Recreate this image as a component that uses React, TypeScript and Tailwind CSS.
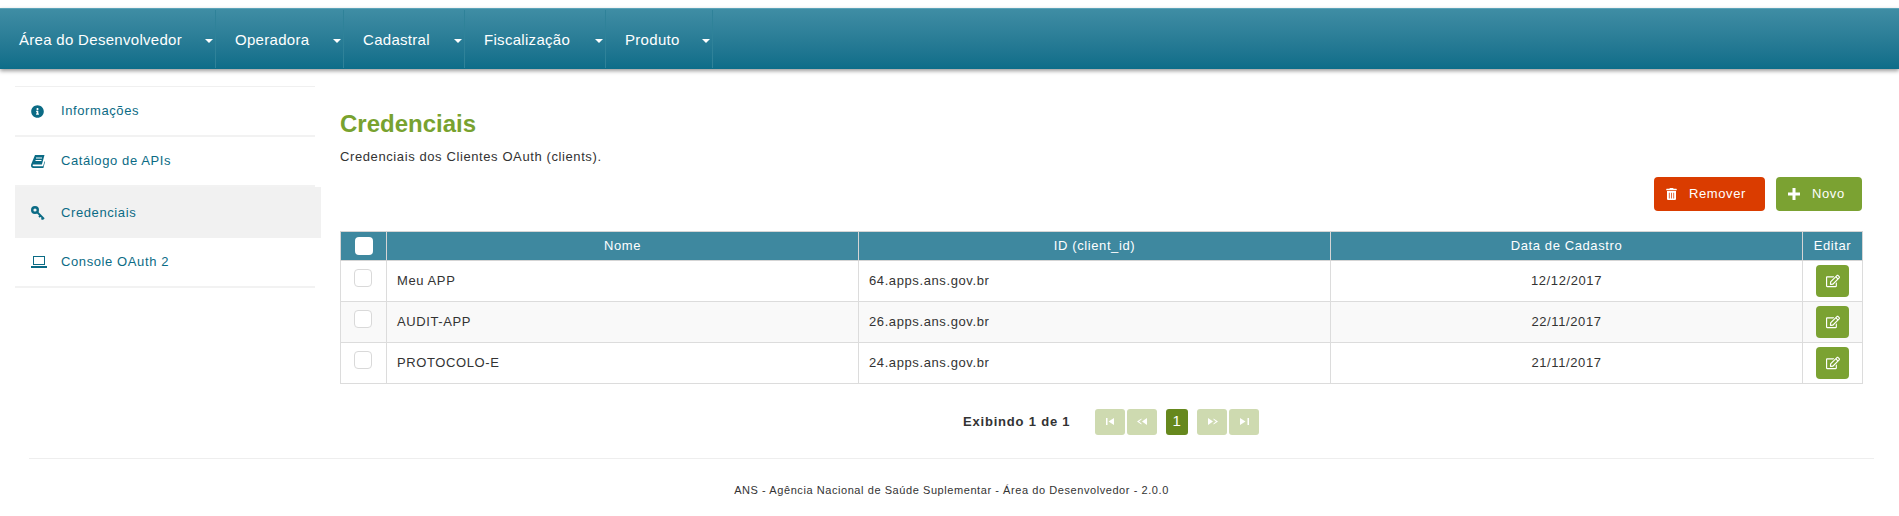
import { FaInfoCircle, FaTrashAlt, FaRegEdit } from "react-icons/fa";

const navItems = [
  { label: "Área do Desenvolvedor", width: "w-[216px]" },
  { label: "Operadora", width: "w-[128px]" },
  { label: "Cadastral", width: "w-[121px]" },
  { label: "Fiscalização", width: "w-[141px]" },
  { label: "Produto", width: "w-[107px]" },
];

function BookIcon() {
  return (
    <svg width="14" height="13" viewBox="0 0 14 13" fill="currentColor">
      <path d="M4 0h9.5l-2.6 9.5H2.6c-.7 0-1 .4-1 .8s.3.9 1 .9h9.5l1.4-5 .5.6-1.6 6.2H2.2C.8 13 0 11.800 0 10.500c0-.5.1-.9.2-1.300zM5 2.500v1h6v-1zM4.500 5v1h6V5z" fillRule="evenodd" />
    </svg>
  );
}

function KeyIcon() {
  return (
    <svg width="14" height="14" viewBox="0 0 14 14" fill="none" stroke="currentColor">
      <circle cx="4" cy="4" r="2.800" strokeWidth="2.400" />
      <path d="M6 6l7 7M9.500 9.500l-1.500 1.500M12 12l-1.500 1.500" strokeWidth="1.800" />
    </svg>
  );
}

function LaptopIcon() {
  return (
    <svg width="16" height="12" viewBox="0 0 16 12" fill="currentColor">
      <path d="M2 0h12v9H2zm1 1v7h10V1zM0 10h16v2H0z" fillRule="evenodd" />
    </svg>
  );
}

const sideItems = [
  { label: "Informações", icon: <FaInfoCircle className="w-[13px] h-[13px]" /> },
  { label: "Catálogo de APIs", icon: <BookIcon /> },
  { label: "Credenciais", icon: <KeyIcon />, active: true },
  { label: "Console OAuth 2", icon: <LaptopIcon /> },
];

const rows = [
  { name: "Meu APP", id: "64.apps.ans.gov.br", date: "12/12/2017" },
  { name: "AUDIT-APP", id: "26.apps.ans.gov.br", date: "22/11/2017" },
  { name: "PROTOCOLO-E", id: "24.apps.ans.gov.br", date: "21/11/2017" },
];

type PageKind = "first" | "prev" | "next" | "last";

function PageIcon({ kind }: { kind: PageKind }) {
  return (
    <svg width="11" height="7" viewBox="0 0 11 7" fill="#fff">
      {kind === "first" && <path d="M1 0h1.500v7H1zM9 0v7L3.500 3.500z" />}
      {kind === "prev" && <path d="M4.500 .5v1L2 3.500l2.500 2v1L0 3.500zM10 0v7L5 3.500z" />}
      {kind === "next" && <path d="M1 0v7l5-3.500zM6.500 .5v1l2.500 2-2.500 2v1L11 3.500z" />}
      {kind === "last" && <path d="M1 0v7l5.500-3.500zM8.500 0H10v7H8.500z" />}
    </svg>
  );
}

function PageButton({ kind }: { kind: PageKind }) {
  return (
    <span className="flex items-center justify-center w-[30px] h-[26px] pb-[2px] rounded-[3px] bg-[#cedab0]">
      <PageIcon kind={kind} />
    </span>
  );
}

export default function App() {
  return (
    <div className="min-h-[516px] bg-white pt-2 text-[13px] tracking-[0.6px] text-[#333] font-['Liberation_Sans',Arial,sans-serif]">
      <nav className="flex h-[61px] items-stretch border-t border-[#5ba3b8] bg-gradient-to-b from-[#3f8da4] to-[#0c6d89] shadow-[0_2px_4px_rgba(0,0,0,0.4)]">
        {navItems.map((item) => (
          <div
            key={item.label}
            className={`${item.width} relative flex items-center pl-[19px] pt-[2px] my-[1px] border-r border-[#2f8299] text-[15px] tracking-[0.3px] text-white`}
          >
            {item.label}
            <span className="absolute right-[2px] top-[29px] border-x-[4px] border-t-[4px] border-x-transparent border-t-white" />
          </div>
        ))}
      </nav>

      <div className="flex pt-[17px]">
        <aside className="w-[300px] ml-[15px] shrink-0 border-t border-[#f0f0f0]">
          {sideItems.map((item) => (
            <div
              key={item.label}
              className={
                item.active
                  ? "flex h-[51px] -mr-[6px] items-center pl-4 bg-[#f1f1f1] text-[#0b6b85]"
                  : "flex h-[50px] items-center pl-4 border-b-2 border-[#f2f2f2] text-[#0b6b85]"
              }
            >
              <span className="flex w-[30px] shrink-0 items-center">{item.icon}</span>
              {item.label}
            </div>
          ))}
        </aside>

        <main className="ml-[25px] w-[1522px]">
          <h1 className="mt-[24px] text-[24px] leading-[28px] font-bold tracking-normal text-[#78a22f]">Credenciais</h1>
          <p className="mt-[11px] leading-[16px]">Credenciais dos Clientes OAuth (clients).</p>

          <div className="mt-[12px] flex justify-end gap-[11px]">
            <button className="flex h-[34px] w-[111px] items-center rounded-[4px] bg-[#da3c00] pl-3 text-white">
              <FaTrashAlt className="w-[11px] h-3 mr-3" />
              Remover
            </button>
            <button className="flex h-[34px] w-[86px] items-center rounded-[4px] bg-[#7ba232] pl-3 text-white">
              <svg width="12" height="12" viewBox="0 0 12 12" fill="currentColor" className="mr-3">
                <path d="M4.500 0h3v4.500H12v3H7.500V12h-3V7.500H0v-3h4.500z" />
              </svg>
              Novo
            </button>
          </div>

          <table className="mt-[20px] w-full table-fixed border-collapse">
            <colgroup>
              <col className="w-[46px]" />
              <col className="w-[472px]" />
              <col className="w-[472px]" />
              <col className="w-[472px]" />
              <col className="w-[60px]" />
            </colgroup>
            <thead>
              <tr className="h-[29px] bg-[#3e889f] text-white font-normal">
                <th className="border border-[#d5d5d5] font-normal">
                  <span className="block mx-auto w-[18px] h-[18px] rounded-[4px] bg-white" />
                </th>
                <th className="border border-[#d5d5d5] font-normal">Nome</th>
                <th className="border border-[#d5d5d5] font-normal">ID (client_id)</th>
                <th className="border border-[#d5d5d5] font-normal">Data de Cadastro</th>
                <th className="border border-[#d5d5d5] font-normal">Editar</th>
              </tr>
            </thead>
            <tbody>
              {rows.map((row, i) => (
                <tr key={row.name} className={i === 1 ? "h-[41px] bg-[#f9f9f9]" : "h-[41px] bg-white"}>
                  <td className="border border-[#dcdcdc]">
                    <span className="block ml-[13px] -mt-[7px] w-[18px] h-[18px] rounded-[4px] border border-[#d9d9d9] bg-white" />
                  </td>
                  <td className="border border-[#dcdcdc] pl-[10px]">{row.name}</td>
                  <td className="border border-[#dcdcdc] pl-[10px]">{row.id}</td>
                  <td className="border border-[#dcdcdc] text-center">{row.date}</td>
                  <td className="border border-[#dcdcdc]">
                    <span className="flex mx-auto w-[33px] h-[32px] items-center justify-center rounded-[4px] bg-[#7ba232] text-white">
                      <FaRegEdit className="w-[14px] h-[14px]" />
                    </span>
                  </td>
                </tr>
              ))}
            </tbody>
          </table>

          <div className="mt-[25px] ml-[623px] flex h-[26px] items-center">
            <strong className="w-[132px] font-bold tracking-[0.8px]">Exibindo 1 de 1</strong>
            <div className="flex gap-[2px]">
              <PageButton kind="first" />
              <PageButton kind="prev" />
            </div>
            <span className="mx-[9px] flex h-[26px] w-[22px] items-center justify-center pb-[2px] rounded-[3px] bg-[#66881d] text-[15px] text-white">1</span>
            <div className="flex gap-[2px]">
              <PageButton kind="next" />
              <PageButton kind="last" />
            </div>
          </div>
        </main>
      </div>

      <footer className="ml-[29px] mr-[25px] mt-[23px] border-t border-[#eeeeee] pt-[24px] text-center text-[11px] leading-[14px] tracking-[0.57px]">
        ANS - Agência Nacional de Saúde Suplementar - Área do Desenvolvedor - 2.0.0
      </footer>
    </div>
  );
}
